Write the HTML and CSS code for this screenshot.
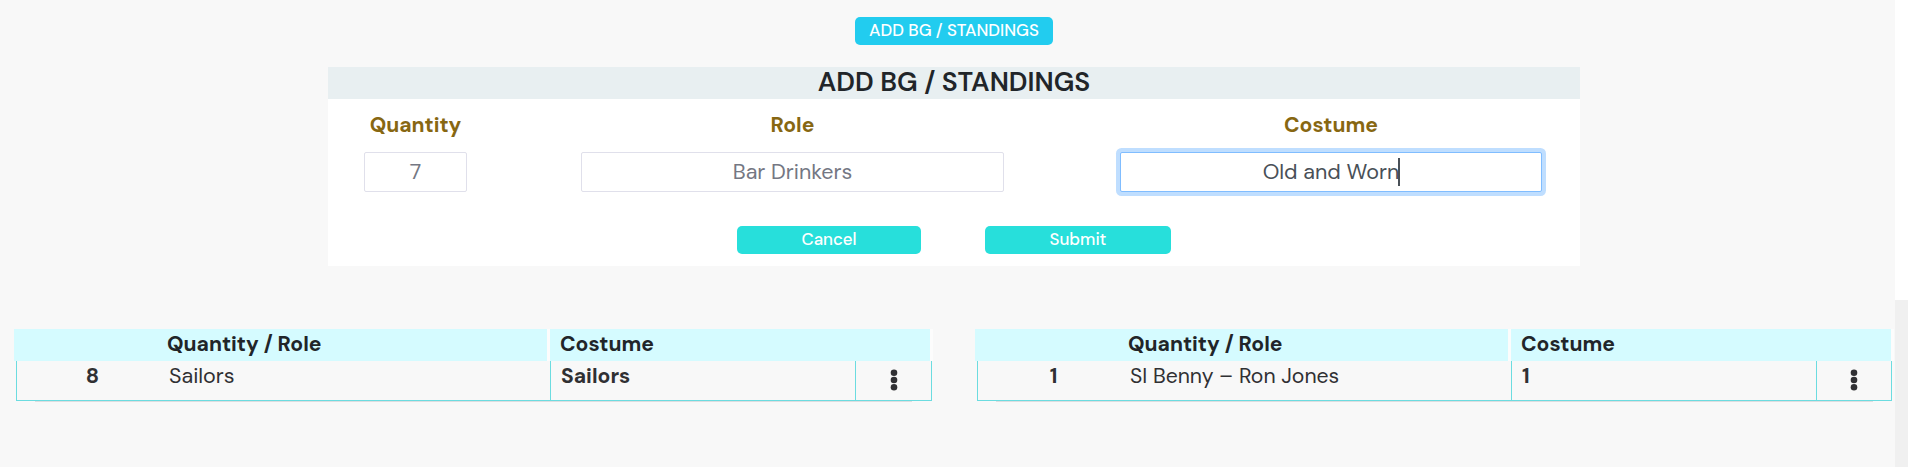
FILE: index.html
```
<!DOCTYPE html>
<html lang="en">
<head>
<meta charset="utf-8">
<title>Add BG / Standings</title>
<link rel="stylesheet" href="styles.css">
</head>
<body>
<div class="app">
  <main class="page">
    <button class="toggle">ADD BG / STANDINGS</button>
    <form class="panel">
      <h2 class="panel-title">ADD BG / STANDINGS</h2>
      <div class="fields">
        <div class="field field-qty"><span class="label">Quantity</span><div class="input">7</div></div>
        <div class="field field-role"><span class="label">Role</span><div class="input">Bar Drinkers</div></div>
        <div class="field field-costume"><span class="label">Costume</span><div class="input input-focus">Old and Worn<i class="caret"></i></div></div>
      </div>
      <div class="actions">
        <button type="button" class="action cancel">Cancel</button>
        <button type="button" class="action submit">Submit</button>
      </div>
    </form>
    <div class="lists">
      <section class="list">
        <div class="head"><div class="head-role">Quantity / Role</div><div class="head-costume">Costume</div></div>
        <div class="row">
          <div class="qty">8</div><div class="role">Sailors</div><div class="costume">Sailors</div>
          <div class="menu"><svg width="8" height="22" viewBox="0 0 8 22"><circle cx="4" cy="3.8" r="3.3"/><circle cx="4" cy="11" r="3.3"/><circle cx="4" cy="18.2" r="3.3"/></svg></div>
        </div>
        <div class="rule"></div>
      </section>
      <section class="list list-narrow">
        <div class="head"><div class="head-role">Quantity / Role</div><div class="head-costume">Costume</div></div>
        <div class="row">
          <div class="qty">1</div><div class="role role-long">SI Benny – Ron Jones</div><div class="costume">1</div>
          <div class="menu"><svg width="8" height="22" viewBox="0 0 8 22"><circle cx="4" cy="3.8" r="3.3"/><circle cx="4" cy="11" r="3.3"/><circle cx="4" cy="18.2" r="3.3"/></svg></div>
        </div>
        <div class="rule"></div>
      </section>
    </div>
  </main>
  <aside class="gutter"></aside>
</div>
</body>
</html>
```
FILE: styles.css
```
* { box-sizing: border-box; }
body { margin: 0; font-family: "DM Sans", Inter, sans-serif; font-size: 21.5px; color: #212529; background: #f8f8f8; overflow: hidden; }
button { border: 0; padding: 0; font: 500 16.9px/27px "DM Sans", Inter, sans-serif; color: #fff; border-radius: 5px; }
.app { display: flex; height: 467px; }
.page { width: 1895px; padding-top: 17px; background: #f8f8f8; }
.gutter { flex: 1; background: #f0f0f0; border-top: 300px solid #fff; }

.toggle { display: block; width: 198px; height: 28px; margin: 0 0 22px 855px; padding-bottom: 1px; background: #22ccef; }

.panel { width: 1252px; height: 199px; margin-left: 328px; background: #fff; }
.panel-title { height: 32px; margin: 0; background: #e8eff1; font-size: 26.7px; font-weight: 600; line-height: 31px; text-align: center; }
.fields { display: flex; padding: 10px 0 0 36px; }
.field { display: flex; flex-direction: column; text-align: center; }
.field-qty { width: 103px; margin-right: 114px; }
.field-role { width: 423px; margin-right: 116px; }
.field-costume { width: 422px; }
.label { height: 43px; font-size: 21.1px; line-height: 32px; font-weight: 700; color: #876712; }
.input { height: 40px; border: 1px solid #e0e0eb; border-radius: 2px; background: #fff; color: #747783; line-height: 38px; }
.input-focus { border-color: #80bdff; box-shadow: 0 0 0 4px #bfdeff; color: #495057; }
.caret { display: inline-block; width: 2px; height: 28px; margin: 0 -1px 0 -1px; background: #495057; vertical-align: -7px; }
.actions { display: flex; gap: 64px; padding: 34px 0 0 409px; }
.action { height: 28px; padding-bottom: 1px; background: #27dfdb; }
.cancel { width: 184px; }
.submit { width: 186px; }

.lists { display: flex; gap: 45px; padding: 63px 0 0 14px; }
.list { width: 916px; }
.head { display: flex; height: 32px; font-size: 21.1px; font-weight: 700; line-height: 31px; }
.head-role { width: 536px; flex: none; padding-left: 153px; border-right: 3px solid #fcfcfc; background: #d5fbff; }
.head-costume { width: 383px; flex: none; padding-left: 10px; border-right: 3px solid #fcfcfc; background: #d5fbff; }
.row { display: flex; width: 916px; height: 40px; margin-left: 2px; border: 1px solid #6cdce0; border-top: 0; color: #303033; line-height: 30px; }
.list-narrow .row { width: 915px; }
.qty { width: 151px; font-size: 21.1px; font-weight: 700; text-align: center; }
.role { width: 382px; padding-left: 1px; }
.role-long { font-size: 21.2px; }
.costume { width: 305px; padding-left: 10px; border-left: 1px solid #6cdce0; font-size: 21.1px; font-weight: 700; }
.menu { flex: 1; display: flex; justify-content: center; padding-top: 8px; border-left: 1px solid #6cdce0; fill: #303033; }
.rule { height: 1px; width: 877px; margin-left: 21px; background: #dedee0; }
```
